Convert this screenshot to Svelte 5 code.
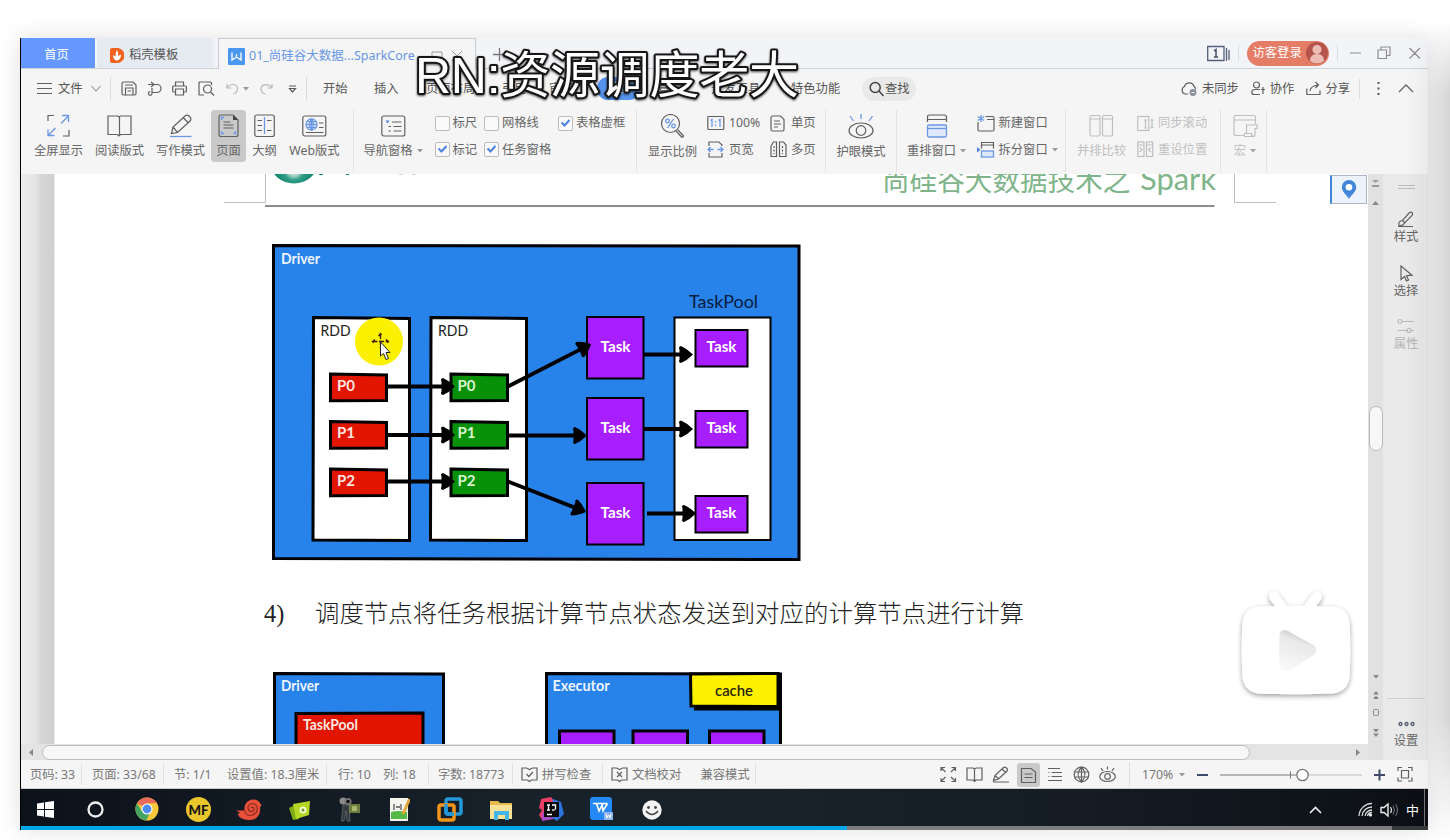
<script>
  const g = 'stroke="#606060" fill="none" stroke-width="1.2"';
  const l = 'stroke="#b9b9b9" fill="none" stroke-width="1.2"';
  const b = 'stroke="#6a97e6" fill="none" stroke-width="1.3"';
  const icons = {
    burger: `<path ${g} d="M0 3.5H15M0 8.5H15M0 13.5H15"/>`,
    down: `<path stroke="#aaa" fill="none" stroke-width="1.2" d="M.5 6 5 11 9.5 6"/>`,
    save: `<path ${g} d="M1 3.5Q1 2 2.5 2H12l3 3v8.5Q15 15 13.500 15H2.500Q1 15 1 13.500ZM4.500 15V8H12V15M4 5h8M6.500 11h3.500"/>`,
    exportp: `<path ${g} d="M1 4.500H6M4 2 7 4.500 4 7M7 4.500h3a4 4 0 0 1 0 8H5.500M5 8v5.500a1.800 1.800 0 1 1-1.800-1.800"/>`,
    print: `<path ${g} d="M3.500 6V2h8V6M3.500 12H1.500Q.7 12 .7 11V7.200Q.7 6 2 6H13.200Q14.400 6 14.400 7.200V11Q14.400 12 13.500 12H11.500M3.500 9h8v6h-8Z"/>`,
    preview: `<path ${g} d="M6 15H2Q1 15 1 14V3Q1 2 2 2H12.500Q13.500 2 13.500 3V5"/><circle ${g} cx="9.500" cy="9" r="4"/><path ${g} d="m12.500 12 3.500 3.500"/>`,
    undo: `<path ${l} d="M1 4v4h4.500M1 8C4 3.500 11 3 11.500 8.500 11.500 11 10 13 7.500 14"/>`,
    redo: `<path ${l} d="M12 4v4H7.500M12 8C9 3.500 1.500 3 1 9 1 11.500 3 13.500 5.500 14"/>`,
    more: `<path ${g} d="M1 6h7M1.500 8.500h6L4.500 12Z"/>`,
    search: `<circle stroke="#444" fill="none" stroke-width="1.500" cx="6.200" cy="7.500" r="5"/><path stroke="#444" stroke-width="1.500" d="m10 11 4.500 5"/>`,
    cloud: `<path ${g} d="M8 14H5a4 4 0 0 1-.5-7.500 5 5 0 0 1 9.500-.3 4 4 0 0 1 1.500 3"/><circle cx="13" cy="12.500" r="3.400" fill="#8a8f9c"/><path d="M11.500 12.500h3" stroke="#fff"/>`,
    person: `<circle ${g} cx="5.500" cy="5" r="3"/><path ${g} d="M9 9.500H4Q.8 9.500.8 12.500 .8 14.500 3 14.500H9M12 7v7M10 9.500h4"/>`,
    share: `<path ${g} d="M.8 8.500v6H14v-4M4 11q.5-5 8-6M9.500 2 12.500 5 9.500 8"/>`,
    up: `<path stroke="#666" fill="none" stroke-width="1.300" d="m1 12 7-7 7 7"/>`,
    full: `<path ${g} d="M1 7V1.500H7M22 16v6H16"/><path ${b} d="M14 9.500 21.500 2M15 1.500h6.500V8M8.500 14 1 21.500M1 15.500v6H7.500"/>`,
    read: `<path ${g} d="M1 2h9.500l1.500 1 1.500-1H24V20.500H13.500L12 22l-1.500-1.500H1ZM12.500 3V21"/>`,
    write: `<path ${g} d="M2.500 19.500 4 13 16 2Q18.500 0 21 3 23 5.500 20.500 7.500L8.500 18.500ZM4 13l4.500 5.500L20 8M14.500 4l5 5"/><path ${b} d="M1 22.500H22.500"/>`,
    page: `<path ${g} d="M1 3Q1 1 3 1H15l5 5V20.500q0 2-2 2H3q-2 0-2-2Z"/><path d="M15 1v5h5Z" fill="#444"/><path ${g} stroke-width="1" d="M5.500 8h7M5.500 11h10M5.500 14h10"/><path ${b} d="M3.500 6V3.500H6M3.500 17v2.500H6M15.500 19.500H17.500V17"/>`,
    outline: `<rect ${g} x=".8" y="1" width="19.500" height="21.500" rx="2"/><path ${b} d="M10.500 3V20"/><path ${g} stroke-width="1" d="M3.500 6.500H8M3.500 11.500H8M3.500 16.500H8M13 6.500h4.500M13 16.500h4.500"/>`,
    web: `<rect ${g} x=".8" y="2" width="23" height="20" rx="2"/><circle ${b} cx="9.500" cy="10.500" r="5.500"/><path ${b} stroke-width="1" d="M4 10.500H15M9.500 5V16M5 7.700h9M5 13.300h9M9.500 5Q5.500 10.500 9.500 16 13.500 10.500 9.500 5"/><path ${g} stroke-width="1" d="M17 9h4.500M17 13.500h4.500M4 18.500H21.500"/>`,
    nav: `<rect ${g} x=".8" y="2" width="23" height="20" rx="2"/><path fill="#4d82df" d="M4.500 6.500h4l-2 3Z"/><path ${g} d="M11 8h9.500M12.500 12.500h8M12.500 17h8M7.500 12.500h2.500M7.500 17h2.500"/>`,
    ratio: `<circle ${g} cx="10.500" cy="9.500" r="9"/><path ${g} d="m16 17 5.500 6q1.500.7 2-1L18 16"/><path ${b} d="M13.500 5 7.500 14"/><circle ${b} cx="7.500" cy="7" r="1.800"/><circle ${b} cx="13.500" cy="12" r="1.800"/>`,
    one: `<rect ${g} x=".8" y="1.500" width="16" height="13" rx="1"/><path ${b} d="M3.500 5.500 5 4.500V12M11.500 5.500 13 4.500V12M8.500 6v1.500M8.500 9.500V11"/>`,
    wide: `<path ${g} d="M2 5V1H12l3 3V5M2 12v4H15V12"/><path ${b} d="M1 8.500H6.500M3.500 6 1 8.500 3.500 11M10.500 8.500H16M13.500 6 16 8.500 13.500 11"/>`,
    single: `<path ${g} d="M1 2.500Q1 1 2.500 1H10.500L14 4.500V14.500Q14 16 12.500 16H2.500Q1 16 1 14.500Z"/><path ${g} stroke-width="1" d="M4 6h6M4 9h7M4 12h4"/>`,
    multi: `<path ${g} d="M1 5 3.500 1H6.500V15.500H1ZM9.500 1h4L16 4V15.500H9.500Z"/><path ${g} stroke-width="1" stroke-dasharray="2 1.500" d="M4 5v8M12.500 5v8"/>`,
    eye: `<ellipse ${g} cx="13" cy="16.500" rx="12" ry="7.500"/><circle ${g} stroke="#999" cx="13" cy="16.500" r="4.800"/><path ${b} d="m2 2 3.500 5M13 0v5M24.500 2 21 7"/>`,
    arrange: `<path ${g} d="M1.500 8V3Q1.500 1 3.500 1H18.500q2 0 2 2V8M1.500 5.500h19"/><rect ${b} x="1.500" y="11" width="19" height="12" rx="1.500" style="fill:#dfe9fb"/><path ${b} d="M1.500 14.500h19"/>`,
    neww: `<path ${g} d="M1 7v7.500Q1 16 2.500 16H15.500Q17 16 17 14.500V3Q17 1.500 15.500 1.500H8.500M10 4.500h7"/><path ${b} stroke-width="1" d="M4 0V7M.7 1.500l6.500 4M7.200 1.500l-6.500 4"/>`,
    split: `<path ${g} d="M4.500 7.500V1.500H16.500V7.500M4.500 4h12"/><rect ${b} x="4.500" y="10" width="12" height="6" style="fill:#dfe9fb"/><path d="M0 6l3.500 2.800L0 11.500Z" fill="#4d82df"/>`,
    compare: `<rect ${l} x="1" y="1.500" width="10" height="20.500" rx="1.500"/><rect ${l} x="13.500" y="1.500" width="10" height="20.500" rx="1.500"/><path ${l} d="M1 5h10M13.500 5h10"/>`,
    sync: `<rect ${l} x=".8" y="1.500" width="11" height="14"/><path ${l} d="M8.500 5v8M7 5h3M7 13h3M15 4V13.500M13.500 5h3M13.500 12.500h3"/>`,
    reset: `<rect ${l} x=".8" y="1" width="6.200" height="14.500"/><rect ${l} x="9.500" y="1" width="6.200" height="14.500"/><path ${l} d="M.8 4H7M9.500 4h6M2.500 6.500 5 8.500 2.500 11M14 6.500 11.500 8.500 14 11"/>`,
    macro: `<path ${l} d="M11 21.500H3q-2 0-2-2V3.500q0-2 2-2H20.500q2 0 2 2V10M1 6H22.500M13.500 19V11H24V14.500H22V20.500Q22 22.500 20 22.500H11.500Q10.500 20.500 12 19.500H18.500Q18 22 20 22.500"/>`,
    check: `<path ${g} stroke="#68708a" d="M1 2H5.500L8.500 3.500 11.500 2H16V14H10.500L8.500 15.500 6.500 14H1Z"/><path ${g} stroke="#68708a" d="m5.500 8 2.300 2.500L12 6"/>`,
    proof: `<path ${g} stroke="#68708a" d="M1 2H5.500L8.500 3.500 11.500 2H16V14H10.500L8.500 15.500 6.500 14H1Z"/><path ${g} stroke="#68708a" d="m6 6 5 5M11 6l-5 5"/>`,
    sfull: `<path ${g} d="M1 5V1.500H5M1.500 2l4 4M11.500 1.500h4V5M15 2 11 6M1 12v3.500H5M1.500 15l4-4M15.500 12v3.500h-4M15 15 11 11"/>`,
    sread: `<path ${g} d="M1 2H7L8.500 3 10 2h6V14H10L8.500 15.500 7 14H1ZM8.500 3V15"/>`,
    spen: `<path ${g} d="M1.500 14.500 3 9.500 11.500 1.500q1.500-1 3 .5t.5 3L6.500 13ZM3 9.500l3.500 3.500M10 3l3.500 3.500M1 16H17"/>`,
    spage: `<path ${g} stroke="#333" d="M1.500 1.500H11L15.500 5V15.500H1.500ZM4.500 7h8M4.500 10.500h8"/>`,
    slist: `<path ${g} d="M1 2.500H13M4.500 6.500H15M4.500 10.500H15M1 14.500H15M1.500 6.500h1M1.500 10.500h1"/>`,
    sglobe: `<circle ${g} cx="8.500" cy="8.500" r="7.300"/><path ${g} stroke-width="1.100" d="M1.500 6H15.500M1.500 11H15.500M8.500 1V16M8.500 1Q1.500 8.500 8.500 16 15.500 8.500 8.500 1"/>`,
    seye: `<ellipse ${g} cx="8.500" cy="10.500" rx="7.800" ry="5"/><circle ${g} cx="8.500" cy="10.500" r="2.800"/><path ${g} d="m2 2 2 3M8.500.500v3M15 2l-2 3"/>`,
    fit: `<path ${g} stroke="#4b5578" d="M1 5V1.500H5M11 1.500h4V5M1 11.500V15H5M11 15h4V11.500M4.500 4.500h7v7.500h-7Z"/>`,
    brush: `<path ${g} d="M1 15.500H16M2 14.500Q1 10 5.500 9.500L12.500 1.500q2-1 3 .8.300 1-.5 2L7.500 12Q6 15 2 14.500M5.500 9.500 8 12"/>`,
    cursor: `<path ${g} d="M4 1V14.500L7.500 11.500 9.500 16l2-1L9.500 10.700l5.500-.5Z"/>`,
    props: `<path ${l} stroke="#aaa" d="M5.500 3.500H17M1 12.500H10M14 12.500H17"/><circle ${l} cx="3" cy="3.500" r="2"/><circle ${l} cx="12" cy="12.500" r="2"/>`,
    pin: `<path fill="#4286dc" d="M8 0a7.200 7.200 0 0 1 7.200 7.200C15.200 12 10 15 8 19 6 15 .8 12 .8 7.200A7.200 7.200 0 0 1 8 0Z"/><circle cx="8" cy="7.200" r="3.300" fill="#fff"/>`,
    win: `<path fill="#fff" d="M0 2.500 7 1.500V8H0ZM8 1.300 17 0V8H8ZM0 9h7v6.500l-7-1ZM8 9h9v8L8 15.800Z"/>`,
    ring: `<circle cx="8.500" cy="8.500" r="7" fill="none" stroke="#eee" stroke-width="2.300"/>`,
    chrome: `<circle cx="12" cy="12" r="11.500" fill="#f8c83a"/><path d="M12 12 2 6.200A11.500 11.500 0 0 1 22 6.300H12Z" fill="#e66b59"/><path d="M2 6.200A11.500 11.500 0 0 0 11 23.500L15.500 15 12 12 7 14.500Z" fill="#43a463"/><circle cx="12" cy="12" r="5.500" fill="#fff"/><circle cx="12" cy="12" r="4.400" fill="#4e8df0"/>`,
    mf: `<circle cx="12.500" cy="12.500" r="12.500" fill="#e9c62c"/><text x="2.500" y="17.500" font-family="Lato" font-weight="900" font-size="14" fill="#161616" textLength="20" lengthAdjust="spacingAndGlyphs">MF</text>`,
    shell: `<path fill="#e8503a" d="M0 11Q4 12 8.500 11 8 3 15 .8 21-.5 24 4L25.500 6 24 8.500Q25 20 14 21 4 21 1.500 15L4 14Z"/><path d="M8.500 11Q9 16 14 16.500 20.500 16 21.500 10 21 4.500 16 4.500 11.500 5.500 12 9.500 13 13 16.500 12.500 19 11 17.500 8.500 16 7.500 15 9" fill="none" stroke="#8f2a1d" stroke-width="1.200"/>`,
    green: `<path fill="#7fae17" d="M0 8 6 5l4 14-6 1Z"/><path fill="#b5d723" d="M4 4 21 1 20 15 7 19Z"/><circle cx="14" cy="10" r="3.500" fill="#f0fad0"/><circle cx="14" cy="10" r="1.500" fill="#6c9410"/>`,
    cam: `<circle cx="4" cy="4" r="3.500" fill="#8b8b8b"/><circle cx="9" cy="4.500" r="3.500" fill="#777"/><circle cx="9" cy="4.500" r="1.800" fill="#111"/><path d="M4 8H10L11 24H8L7 14 5 24H2.500Z" fill="#333b3f" stroke="#6a7173" stroke-width=".7"/><rect x="10" y="7" width="11" height="9" fill="#6c7d42"/><rect x="13" y="9" width="5" height="5" fill="#a5b56a"/>`,
    note: `<rect x="1" y="1" width="18" height="23" fill="#f5f5f0"/><path d="M2 15q8-2 16 0v7H2Z" fill="#55b947"/><path d="M5 7v6M7 10h4M12 7v6" stroke="#555" stroke-width="1.300"/><path d="M20.500 2 14 17" stroke="#e1a83b" stroke-width="3"/>`,
    vm: `<rect x="9" y="2" width="15" height="15" rx="2" fill="none" stroke="#2498d8" stroke-width="3.500"/><rect x="2" y="8" width="15" height="15" rx="2" fill="none" stroke="#f2951b" stroke-width="3.500"/><path d="M9 7v8Q9 17 11 17H17" stroke="#2498d8" stroke-width="3.500" fill="none"/>`,
    folder: `<path fill="#e8ba4d" d="M0 1H8l2 2H22V19H0Z"/><path fill="#fbe297" d="M0 5H22V19H0Z"/><path fill="#43b5e8" d="M4 11H19v9H15V15H8v5H4Z"/>`,
    idea: `<path fill="#e93e66" d="M2 2 12 0l5 7L4 24 0 18 3 13 0 11Z"/><path fill="#2d75df" d="m14 2 8 3 3 12-7 7-6-4Z"/><path fill="#a94cc7" d="m3 15 12 7-12 2Z"/><rect x="5" y="5" width="15" height="15" fill="#080808"/><path d="M8 8h3M9.500 8v5M8 13h3M13 8h3.500v4q-1 1.500-3.500 1M8 17.500h5" stroke="#fff" stroke-width="1.300" fill="none"/>`,
    wps: `<rect width="22" height="23" rx="3" fill="#2688f4"/><path d="M3 6.500H6.500L9 14 13 6.500H17.500M7.500 6.500H12L13 14 17.500 6.500" fill="none" stroke="#fff" stroke-width="1.600"/><rect x="14" y="15" width="9" height="8" fill="#90b5ee"/><path d="m16 17 1 4 1.500-3 1.500 3 1-4" fill="none" stroke="#fff"/>`,
    smile: `<circle cx="10" cy="10" r="9.700" fill="#f3f3f3"/><circle cx="6.500" cy="7.500" r="1.400" fill="#444"/><circle cx="13.500" cy="7.500" r="1.400" fill="#444"/><path d="M4 11q6 7 12 0" stroke="#444" fill="none" stroke-width="1.500"/>`,
    wifi: `<path d="M1 14A13 13 0 0 1 14 1.500M4 14A10 10 0 0 1 14 5M7 14a7 7 0 0 1 7-6M9.500 14A4.500 4.500 0 0 1 14 10.500" stroke="#ddd" stroke-width="1.300" fill="none"/><circle cx="12.500" cy="13" r="1.500" fill="#fff"/>`,
    vol: `<path d="M1 5.500H4L8 2V14L4 10.500H1Z" fill="none" stroke="#eee" stroke-width="1.400"/><path d="M10.500 5q2 3 0 6" fill="none" stroke="#ddd" stroke-width="1.200"/><path d="M13 3.500q3 4.500 0 9M15.500 2q4 6 0 12" fill="none" stroke="#777"/>`,
    tri: `<path fill="#999" d="M0 0h6L3 3.500Z"/>`,
    triup: `<path fill="#888" d="M0 4h7L3.500 0Z"/>`
  };
  const quick = [
    ['save', 26], ['exportp', 25], ['print', 26], ['preview', 28], ['undo', 17], ['tri', 17], ['redo', 28.5], ['more', 17]
  ];
  const menus = [
    ['开始', 51], ['插入', 52], ['页面布局', 76], ['引用', 47], ['审阅', 57], ['视图', 52, true], ['章节', 53], ['开发工具', 80], ['特色功能', 71]
  ];
  const views = [
    ['full', '全屏显示', 61, 23], ['read', '阅读版式', 61, 25], ['write', '写作模式', 61, 24],
    ['page', '页面', 35, 21, true], ['outline', '大纲', 37, 21], ['web', 'Web版式', 63, 25]
  ];
  const status = [
    ['页码: 33', 52, 1], ['页面: 33/68', 72, 1], ['节: 1/1', 53], ['设置值: 18.3厘米', 99.5, 1], ['行: 10', 45],
    ['列: 18', 46, 1], ['字数: 18773', 75, 1]
  ];
  const tasks = [
    ['win', 17, 50], ['ring', 17, 51], ['chrome', 24, 51.5], ['mf', 25, 51], ['shell', 26, 51], ['green', 22, 50], ['cam', 22, 50],
    ['note', 21, 50], ['vm', 26, 51], ['folder', 22, 50], ['idea', 25, 51], ['wps', 23, 50], ['smile', 20, 50]
  ];
  const parts = [0, 1, 2];
  const rowY = [374, 421.5, 469];
  const lineY = [386.5, 435, 481.5];
  const taskY = [317, 398, 483];
  const poolY = [330, 411, 496];
  const taskText = [352, 433, 518];
</script>

{#snippet icon(name, w = 17, h = 17)}
  <svg class="ic" width={w} height={h} viewBox="0 0 {w} {h}">{@html icons[name]}</svg>
{/snippet}

{#snippet arrow(x1, y1, x2, y2)}
  <g transform="translate({x2} {y2}) rotate({(Math.atan2(y2 - y1, x2 - x1) * 180) / Math.PI})">
    <path d="M{-Math.hypot(x2 - x1, y2 - y1)} 0H-8" stroke="#000" stroke-width="3.8" />
    <path d="M0 0Q-6-6-12-8.500-15-8-13.500-5V5Q-15 8-12 8.500-6 6 0 0Z" />
  </g>
{/snippet}

{#snippet hand(x, y, len, label, fill)}
  <text {x} {y} {fill} textLength={len} lengthAdjust="spacingAndGlyphs">{label}</text>
{/snippet}

{#snippet box(label, on)}
  <span class="check"><i class:on>{#if on}<svg width="11" height="10" viewBox="0 0 11 10"><path d="M1.500 4.500 4.500 7.500 9.500 2" fill="none" stroke="#4d82df" stroke-width="2" /></svg>{/if}</i>{label}</span>
{/snippet}

<div class="screen">
  <main class="window">
    <header class="tabs">
      <div class="home">首页</div>
      <div class="tab docer">
        <svg width="14" height="15" viewBox="0 0 14 15"><path fill="#f4601d" d="M0 2Q0 0 2 0H7a7.500 7.500 0 0 1 0 15H2Q0 15 0 13Z" /><path fill="#fff" d="M7 2Q9 5 8 8L11 6.500Q11 12 7 12.500 3 12 3 7L5.500 8.500Q5 5 7 2Z" /></svg>
        稻壳模板
      </div>
      <div class="tab active">
        <svg width="17" height="17" viewBox="0 0 17 17"><rect width="17" height="17" rx="1" fill="#4c97ee" /><path d="M4 4.500V12L8.500 9l4.500 3V4.500M8.500 9V6" fill="none" stroke="#fff" stroke-width="1.300" /></svg>
        <span>01_尚硅谷大数据...SparkCore</span>
        <svg class="tabctl" width="32" height="13" viewBox="0 0 32 13"><path d="M1 2h10v7H1ZM4 12h4M21 1l10 10M31 1 21 11" fill="none" stroke="#999" /></svg>
      </div>
      <div class="plus"><svg width="13" height="13" viewBox="0 0 13 13"><path d="M6.500 0v13M0 6.500h13" stroke="#777" stroke-width="1.300" /></svg></div>
      <div class="caption-tools">
        <svg width="23" height="17" viewBox="0 0 23 17"><path d="M.7 1.500H17V15.500H.7ZM19.500 3v13M22 5v10" fill="none" stroke="#56607c" stroke-width="1.300" /><path d="M7 6 9 4.500V12M7 12h4" fill="none" stroke="#444c68" stroke-width="1.500" /></svg>
        <i class="bar"></i>
        <div class="login">访客登录<svg width="22" height="22" viewBox="0 0 22 22"><circle cx="11" cy="11" r="11" fill="#b4544c" /><circle cx="11" cy="7.500" r="4.500" fill="#edbdb5" /><path d="M4 19q0-7 7-7t7 7q-7 5-14 0Z" fill="#edbdb5" /></svg></div>
        <i class="bar two"></i>
        <svg width="71" height="14" viewBox="0 0 71 14"><path d="M0 7h11M28 4h8.500v8.500H28ZM31 4V1h9V9.500H36.500M59.500 2 70 12.500M70 2 59.500 12.500" fill="none" stroke="#8e8e8e" stroke-width="1.200" /></svg>
      </div>
    </header>

    <nav class="menu">
      <div class="file">{@render icon('burger', 15)}<span>文件</span>{@render icon('down', 10)}</div>
      <i class="bar"></i>
      <div class="quick">{#each quick as [name, w]}<span style:width="{w}px">{@render icon(name, name === 'tri' ? 6 : 17, name === 'tri' ? 4 : 17)}</span>{/each}</div>
      <i class="bar"></i>
      <div class="items">{#each menus as [name, w, on]}<span style:width="{w}px"><b class:on>{name}</b></span>{/each}</div>
      <div class="find">{@render icon('search', 16)}查找</div>
      <div class="account">
        {@render icon('cloud', 18)}<span>未同步</span>{@render icon('person', 15)}<span>协作</span>{@render icon('share', 15)}<span>分享</span>
        <i class="bar"></i><svg class="dots" width="3" height="15" viewBox="0 0 3 15"><path d="M1.500 1v2M1.500 6.500v2M1.500 12v2" stroke="#555" stroke-width="2" /></svg>{@render icon('up', 16)}
      </div>
    </nav>

    <section class="ribbon">
      <div class="group views">
        {#each views as [name, label, w, iw, on]}<div class="tool" class:on style:width="{w}px">{@render icon(name, iw, 24)}<span>{label}</span></div>{/each}
      </div>
      <div class="group panes">
        <div class="tool nav">{@render icon('nav', 25, 24)}<span>导航窗格 {@render icon('tri', 6, 4)}</span></div>
        <div class="checks">
          {@render box('标尺', false)}{@render box('网格线', false)}{@render box('表格虚框', true)}
          {@render box('标记', true)}{@render box('任务窗格', true)}
        </div>
      </div>
      <div class="group zoomg">
        <div class="tool">{@render icon('ratio', 25, 25)}<span>显示比例</span></div>
        <div class="pair a"><span>{@render icon('one', 18)}100%</span><span>{@render icon('wide', 18)}页宽</span></div>
        <div class="pair"><span>{@render icon('single')}单页</span><span>{@render icon('multi')}多页</span></div>
      </div>
      <div class="group eyeg"><div class="tool">{@render icon('eye', 26, 25)}<span>护眼模式</span></div></div>
      <div class="group windows">
        <div class="tool">{@render icon('arrange', 22, 24)}<span>重排窗口 {@render icon('tri', 6, 4)}</span></div>
        <div class="pair"><span>{@render icon('neww', 18)}新建窗口</span><span>{@render icon('split', 18)}拆分窗口 {@render icon('tri', 6, 4)}</span></div>
      </div>
      <div class="group compare off">
        <div class="tool">{@render icon('compare', 25, 24)}<span>并排比较</span></div>
        <div class="pair"><span>{@render icon('sync')}同步滚动</span><span>{@render icon('reset')}重设位置</span></div>
      </div>
      <div class="group macro off"><div class="tool">{@render icon('macro', 25, 24)}<span>宏 {@render icon('tri', 6, 4)}</span></div></div>
    </section>

    <section class="work">
      <div class="canvas">
        <svg class="doc" width="1347" height="570" viewBox="21 174 1347 570">
          <defs>
            <linearGradient id="edge"><stop offset="0" stop-color="#ebebeb" /><stop offset=".45" stop-color="#e4e4e4" /><stop offset=".6" stop-color="#d6d6d6" /><stop offset="1" stop-color="#cfcfcf" /></linearGradient>
            <radialGradient id="teal" gradientUnits="userSpaceOnUse" cx="294" cy="170" r="17"><stop offset="0" stop-color="#d6eee8" /><stop offset=".35" stop-color="#a5d5c8" /><stop offset=".6" stop-color="#2f9c84" /><stop offset="1" stop-color="#178a72" /></radialGradient>
            <linearGradient id="play" x1=".5" x2=".2" y2=".9"><stop offset="0" stop-color="#c6c6c6" /><stop offset=".3" stop-color="#e9e9e9" /><stop offset="1" stop-color="#f8f8f8" /></linearGradient>
            <filter id="soft" x="-30%" y="-30%" width="160%" height="160%"><feDropShadow dx="0" dy="2" stdDeviation="2.500" flood-opacity=".38" /></filter>
          </defs>
          <rect x="21" y="174" width="1347" height="570" fill="#fff" />
          <rect x="21" y="174" width="33.500" height="570" fill="url(#edge)" />
          <path d="M265.500 174V202.500H224M1234.500 174V202.500H1276" fill="none" stroke="#bdbdbd" />
          <ellipse cx="294" cy="164" rx="23" ry="19.500" fill="url(#teal)" />
          <path d="M319 174h4M346 174h3" stroke="#178a72" stroke-width="2" /><path d="M399 174h4M412 174h4" stroke="#aaa" />
          <g fill="#80b48b" font-size="27.600"><text x="882" y="190.500">尚硅谷大数据技术之</text><text x="1140" y="190" font-family="Lato" font-size="31" textLength="76" lengthAdjust="spacingAndGlyphs">Spark</text></g>
          <path d="M265 206H1214.500" stroke="#8c8c8c" stroke-width="1.800" />

          <g stroke="#000" stroke-width="3" fill="#fff">
            <path d="M273.500 245.500 799 246V559.500L273.500 558.500Z" fill="#2782ea" />
            <path d="M313.500 317.500 409.500 318.500V540.500L313 540ZM431 317.500 526.500 318.500V540.500L430.500 540Z" />
            <rect x="674.500" y="317.500" width="96" height="222.500" stroke-width="2" />
            {#each parts as i}
              <path d="M330.500 {rowY[i]}l56 1v25.500l-56 .3Z" fill="#e21500" />
              <path d="M451 {rowY[i]}l56.500 1v25.500l-56.500 .3Z" fill="#079109" />
              <rect x="587" y={taskY[i]} width="56.500" height="61.500" fill="#a71eff" stroke-width="2" />
              <rect x="695.500" y={poolY[i]} width="52" height="36.500" fill="#a71eff" stroke-width="2" />
            {/each}
          </g>
          {#each parts as i}{@render arrow(388, lineY[i], 455, lineY[i])}{/each}
          {@render arrow(508, 386.5, 591, 344)}
          {@render arrow(508, 435.5, 587, 435.5)}
          {@render arrow(508, 481.5, 586, 512)}
          {@render arrow(644, 354.5, 693, 354.5)}
          {@render arrow(644, 429, 693, 429)}
          {@render arrow(647, 513.5, 696, 513.5)}
          <g class="hand" font-weight="700">
            {@render hand(281, 263.5, 39, 'Driver', '#eef4ff')}
            {#each parts as i}
              {@render hand(337, rowY[i] + 16.5, 18, 'P' + i, '#ffe6e0')}
              {@render hand(457.5, rowY[i] + 16.5, 18, 'P' + i, '#d9f5d0')}
              {@render hand(600.5, taskText[i], 30, 'Task', '#fff')}
              {@render hand(706.5, taskText[i], 30, 'Task', '#fff')}
            {/each}
          </g>
          <g class="hand">{@render hand(320.5, 335.5, 30, 'RDD', '#222')}{@render hand(438, 335.5, 30, 'RDD', '#222')}</g>
          <g class="hand pool">{@render hand(689, 308, 69, 'TaskPool', '#071b3c')}</g>
          <circle cx="379" cy="341.500" r="24" fill="#faf000" />
          <path d="M380.500 334v14M372.500 341.500h16M378.500 336l2-2.500 2 2.500M375 339.500l-2.500 2 2.500 2M386 339.500l2.500 2-2.500 2" fill="none" stroke="#421" stroke-width="1.400" stroke-dasharray="5 1.500" />
          <path d="M380.500 342V356L383.500 353.500 386 359.500 388.500 358.500 386 352.500H390Z" fill="#fff" stroke="#222" />

          <text class="body" x="264" y="621.500">4)</text>
          <text class="body" x="315" y="621.500" textLength="709">调度节点将任务根据计算节点状态发送到对应的计算节点进行计算</text>

          <g stroke="#000" stroke-width="3">
            <path d="M274.500 673.500 443.500 674V750H274.500ZM546.500 673.500 780.500 674V750H546.500Z" fill="#2782ea" />
            <path d="M296 713.500 423 713V750H296Z" fill="#e21500" />
            <path d="M690.500 674 778 673.500V706.500L691 706Z" fill="#fff200" /><path d="M694 708.500H781M779.500 673V709" stroke-width="4" />
            <path d="M559.500 731H614V750H559.500ZM633 731H687.500V750H633ZM709.500 731H764V750H709.500Z" fill="#a71eff" />
          </g>
          <g class="hand" font-weight="700">{@render hand(281, 691, 38, 'Driver', '#eef4ff')}{@render hand(303, 730, 55, 'TaskPool', '#ffe6e0')}{@render hand(552.5, 691, 57, 'Executor', '#eef4ff')}</g>
          <g class="hand" font-weight="600">{@render hand(715, 696, 38, 'cache', '#27250a')}</g>

          <g filter="url(#soft)"><path d="M1274 596.500 1284 610M1317 596.500 1307 610" stroke="#fff" stroke-width="10" stroke-linecap="round" /><path fill="#fff" d="M1258 606.500Q1295 605 1333 606.500 1348 608 1349.500 623 1351 650 1349.500 677 1348 691 1333 693.500 1296 695 1258 693.500 1244 691 1242.500 677 1241 650 1242.500 623 1244 608 1258 606.500Z" /></g>
          <path fill="url(#play)" d="M1279.500 635Q1280.500 628 1288 631L1314 645.500Q1319 650 1314 655L1290 670.500Q1281 673 1279.500 666 1278.500 650 1279.500 635Z" />
        </svg>
        <div class="pinbox">{@render icon('pin', 16, 19)}</div>
        <div class="hscroll"><svg width="5" height="7" viewBox="0 0 5 7"><path d="M4 0v7L0 3.500Z" fill="#888" /></svg><i></i><svg class="r" width="5" height="7" viewBox="0 0 5 7"><path d="M0 0v7L4 3.500Z" fill="#888" /></svg></div>
      </div>
      <div class="vscroll">
        <svg width="9" height="8" viewBox="0 0 9 8"><path d="M2 0h5L4.500 3ZM1 5h7v2H1Z" fill="#999" /><path d="M1.500 1H7.500" stroke="#999" /></svg>
        {@render icon('triup', 7, 4)}
        <i></i>
        <svg class="ends" width="8" height="64" viewBox="0 0 8 64"><path d="M1 1h6L4 4.500ZM1 20.500h6L4 17ZM1 25h6L4 21.500ZM1 55h6L4 58.500ZM1 59.500h6L4 63Z" fill="#888" /><rect x="1.500" y="35.500" width="5" height="6" rx="1" fill="none" stroke="#888" /></svg>
      </div>
      <aside>
        <i class="grip"></i>
        <div>{@render icon('brush')}样式</div><div>{@render icon('cursor')}选择</div><div class="dim">{@render icon('props', 18)}属性</div>
        <div class="setting"><svg width="17" height="6" viewBox="0 0 17 6"><g fill="none" stroke="#555c70" stroke-width="1.300"><circle cx="2.500" cy="3" r="1.500" /><circle cx="8.500" cy="3" r="1.500" /><circle cx="14.500" cy="3" r="1.500" /></g></svg>设置</div>
      </aside>
    </section>

    <footer class="status">
      <div class="facts">
        {#each status as [text, w, line]}<span class:line style:width="{w}px">{text}</span>{/each}
        <span class="line spell">{@render icon('check')}拼写检查</span>
        <span class="proof">{@render icon('proof')}文档校对</span>
        <span class="line compat">兼容模式</span>
      </div>
      <div class="modes">
        {@render icon('sfull')}{@render icon('sread')}{@render icon('spen', 18)}<span class="sel">{@render icon('spage')}</span>{@render icon('slist')}{@render icon('sglobe')}{@render icon('seye')}
      </div>
      <div class="zoomer">
        <span>170%</span>{@render icon('tri', 6, 4)}
        <svg width="188" height="14" viewBox="0 0 188 14"><path d="M0 7h11M177 7h11M182.500 1.500v11" stroke="#3e4a6b" stroke-width="2" /><path d="M23 7H99M93.500 3.500v7" stroke="#777" fill="none" /><path d="M112 7h53" stroke="#bbb" /><circle cx="105.500" cy="7" r="5.700" fill="#fff" stroke="#777" stroke-width="1.300" /></svg>
        {@render icon('fit', 16)}
      </div>
    </footer>

    <div class="taskbar">
      <div class="apps">{#each tasks as [name, w, cell]}<span style:width="{cell}px">{@render icon(name, w, { win: 17, ring: 17, smile: 20, folder: 20, green: 20, shell: 21 }[name] ?? 25)}</span>{/each}</div>
      <div class="tray"><svg width="13" height="8" viewBox="0 0 13 8"><path d="m1 7 5.500-5.500L12 7" fill="none" stroke="#eee" stroke-width="1.600" /></svg>{@render icon('wifi', 16, 16)}{@render icon('vol', 19, 16)}<span>中</span><i></i></div>
    </div>
    <div class="progress"><i></i><b></b></div>
  </main>
  <div class="side-shade"></div>
  <svg class="subtitle" width="400" height="66" viewBox="0 0 400 66"><text x="3" y="48" textLength="384">RN:资源调度老大</text></svg>
</div>

<style>
  :global(body) { margin: 0; background: #fff; overflow: hidden; }
  * { box-sizing: border-box; }
  .screen { position: relative; width: 1450px; height: 840px; padding: 38px 22px 10px 20px; overflow: hidden; background: #fff; font: 12.3px/16px "Noto Sans", "Noto Sans CJK SC", sans-serif; color: #666; }
  .window { width: 1408px; height: 792px; border-left: 1px solid #000; display: flex; flex-direction: column; background: #f5f5f5; box-shadow: 0 0 22px rgba(0, 0, 0, .13); }
  .ic, svg { display: block; flex: none; }
  .bar { width: 1px; background: #dcdcdc; flex: none; }

  .tabs { height: 31px; flex: none; display: flex; background: #f3f4f7; border-bottom: 1px solid #cdd1da; white-space: nowrap; }
  .home { width: 74px; display: flex; align-items: center; justify-content: center; padding: 4px 3px 0 0; background: #6598ff; color: #fff; }
  .tab { display: flex; align-items: center; padding-top: 4px; }
  .docer { width: 119px; margin-left: 2px; padding-left: 13px; gap: 5px; background: #e6eaf1; color: #555; border-right: 3px solid #f0f2f6; }
  .active { width: 258px; height: 31px; margin-left: 2px; padding-left: 9px; gap: 4px; border: 1px solid #c6cbd6; border-bottom: 0; background: #f5f5f5; color: #6797e4; }
  .active span { width: 172px; font-size: 12.500px; }
  .tabctl { margin-left: 6px; }
  .plus { padding: 10px 0 0 17px; }
  .caption-tools { margin-left: auto; padding-right: 7px; display: flex; align-items: center; }
  .caption-tools .bar { height: 16px; margin: 0 8px; }
  .caption-tools .two { margin-right: 12px; }
  .login { width: 82.5px; height: 25px; display: flex; align-items: center; justify-content: space-between; padding: 0 1px 0 6px; border-radius: 13px; background: #e57c65; color: #fff; }

  .menu { height: 38px; flex: none; display: flex; align-items: center; padding-top: 1px; white-space: nowrap; color: #555; }
  .menu > .bar { height: 24px; }
  .file { display: flex; align-items: center; width: 89px; padding-left: 16px; }
  .file span { margin: 0 8px 0 6px; }
  .quick { display: flex; align-items: center; width: 195px; padding-left: 9.5px; }
  .quick span { display: flex; flex: none; }
  .items { display: flex; padding-left: 16px; width: 555px; }
  .items span { flex: none; }
  .items b { font-weight: 400; }
  .items b.on { margin: 0 -9px; padding: 3px 9px; border-radius: 11px; background: #5593ed; color: #fff; }
  .find { display: flex; align-items: center; height: 24px; width: 54px; padding-left: 7px; border-radius: 12px; background: #e9e9e9; }
  .account { margin-left: auto; display: flex; align-items: center; padding-right: 14px; }
  .account span { margin: 0 12px 0 4px; }
  .account .bar { height: 20px; margin-left: -3px; }
  .account .dots { margin: 0 18px 0 17px; }

  .ribbon { height: 67px; flex: none; display: flex; padding-top: 3px; white-space: nowrap; }
  .group { display: flex; height: 62px; flex: none; border-right: 1px solid #e3e3e3; }
  .tool { display: flex; flex-direction: column; align-items: center; height: 52px; padding-top: 4px; flex: none; }
  .tool > span { display: flex; align-items: center; gap: 4px; margin-top: 5px; }
  .tool.on { background: #c9c9c9; border-radius: 4px; }
  .views { width: 332.5px; padding-left: 7px; }
  .panes { width: 283.5px; }
  .nav { width: 79px; }
  .checks { display: grid; grid-template-columns: 49.5px 74px 74px; grid-template-rows: 26.500px 26.500px; padding-left: 2px; }
  .check { display: flex; align-items: center; gap: 3px; }
  .check i { width: 15px; height: 15px; padding: 1px; border: 1px solid #bcbcbc; border-radius: 2px; background: #fafafa; }
  .zoomg { width: 188.5px; padding-left: 6px; }
  .zoomg .tool { width: 59px; }
  .pair { display: grid; grid-template-rows: 26.500px 26.500px; align-items: center; }
  .pair span { display: flex; align-items: center; gap: 4px; }
  .pair.a { width: 68px; padding-left: 5px; }
  .eyeg { width: 71px; padding-left: 7px; }
  .eyeg .tool { width: 57px; }
  .windows { width: 169.5px; padding-left: 10px; }
  .windows .tool { width: 60px; }
  .windows .pair { padding-left: 10px; }
  .compare { width: 155px; padding-left: 10px; }
  .compare .tool { width: 51px; }
  .compare .pair { padding-left: 10px; }
  .macro { width: 46px; padding-left: 7px; }
  .macro .tool { width: 34px; }
  .off { color: #c0c0c0; }
  .off svg { opacity: .9; }

  .work { height: 586px; flex: none; display: flex; background: #e2e2e2; }
  .canvas { position: relative; width: 1347px; flex: none; }
  .doc { font-family: "Noto Sans CJK SC", sans-serif; }
  .hand { font-family: Lato, "Liberation Sans", sans-serif; font-size: 14.500px; }
  .pool { font-size: 17px; }
  .body { font-family: "Liberation Serif", "Noto Sans CJK SC", serif; font-size: 24.4px; font-weight: 300; fill: #222; }
  .pinbox { position: absolute; right: 1px; top: 1px; width: 37px; height: 29px; padding: 4px 0 0 9px; border: 1px solid #aab4c2; border-left: 2px solid #3f86d8; background: #edf3fd; }
  .hscroll { height: 16px; display: flex; align-items: center; padding-left: 8px; background: #e4e4e4; }
  .hscroll i { width: 1208px; height: 15px; margin-left: 8px; border: 1px solid #bcbcbc; border-radius: 8px; background: #f7f7f7; }
  .hscroll .r { margin-left: 106px; }
  .vscroll { width: 15px; flex: none; display: flex; flex-direction: column; align-items: center; padding-top: 6px; background: #e1e1e1; }
  .vscroll svg:nth-child(2) { margin-top: 13px; }
  .vscroll i { width: 14px; height: 45px; margin-top: 201px; border: 1px solid #b9b9b9; border-radius: 7px; background: #f7f7f7; }
  .vscroll .ends { margin-top: 223px; }
  aside { flex: 1; display: flex; flex-direction: column; align-items: center; padding-left: 1px; background: #eaeaea; }
  .grip { width: 17px; height: 4px; margin: 11px 0 22px; border: solid #bcbcbc; border-width: 1px 0; }
  aside div { display: flex; flex-direction: column; align-items: center; gap: 1px; height: 53.5px; color: #666; }
  aside .dim { color: #b5b5b5; }
  aside .setting { width: 38px; height: 54px; margin-top: 326px; padding-top: 22px; gap: 6px; border-top: 1px solid #d0d0d0; }

  .status { height: 29px; flex: none; display: flex; align-items: center; padding-top: 1px; border-bottom: 1px solid #cfcfcf; white-space: nowrap; color: #777; }
  .facts { display: flex; align-items: center; padding-left: 9px; width: 919px; }
  .facts span { flex: none; display: flex; align-items: center; gap: 4px; height: 21px; }
  .facts span:nth-child(1) { margin-right: 10px; }
  .facts span:nth-child(2) { margin-right: 10px; }
  .facts span:nth-child(4) { margin-right: 11.5px; }
  .facts span:nth-child(6) { margin-right: 9px; }
  .facts span:nth-child(7) { margin-right: 8px; }
  .facts .line { border-right: 1px solid #e0e0e0; }
  .facts .spell { width: 82px; }
  .facts .proof { width: 97.5px; padding-left: 8px; }
  .facts .compat { width: 55px; }
  .modes { display: flex; align-items: center; width: 190px; height: 25px; border-right: 1px solid #ddd; gap: 9px; }
  .modes .sel { width: 23px; height: 24px; margin: 0 -2px; padding: 4px 3px; border-radius: 3px; background: #c9c9c9; }
  .zoomer { display: flex; align-items: center; padding-left: 12px; }
  .zoomer span { width: 37px; }
  .zoomer svg:nth-of-type(1) { margin-right: 12px; }
  .zoomer svg:nth-of-type(2) { margin-right: 12px; }

  .taskbar { height: 37px; flex: none; display: flex; align-items: center; justify-content: space-between; padding-top: 4px; background: linear-gradient(90deg, #0c121b, #17212a 35%, #17222a 55%, #151c24 75%, #0c1015); }
  .apps { display: flex; margin-left: -1px; }
  .apps span { display: flex; align-items: center; justify-content: center; flex: none; }
  .tray { display: flex; align-items: center; color: #fff; font-size: 13px; }
  .tray svg:nth-of-type(2) { margin: 0 6px 0 36px; }
  .tray span { margin: 0 5px 0 7px; }
  .tray i { width: 1px; height: 37px; margin: -4px 3px 0 0; background: #777; }
  .progress { height: 4px; flex: none; display: flex; background: #38393b; }
  .progress i { width: 826px; background: #00a7e8; }
  .progress b { width: 545px; background: #7d7d7f; }

  .side-shade { position: absolute; right: 0; top: 20px; width: 46px; height: 820px; background: linear-gradient(90deg, transparent, rgba(0, 0, 0, .03) 45%, rgba(0, 0, 0, .16)); mask-image: linear-gradient(transparent, #000 9%, #000 85%, transparent); pointer-events: none; }
  .subtitle { position: absolute; left: 412px; top: 45px; overflow: visible; font: 50px "Liberation Sans", "Noto Sans CJK SC", sans-serif; filter: drop-shadow(0 1px 1px rgba(0, 0, 0, .7)); }
  .subtitle text { fill: #fff; stroke: #161616; stroke-width: 4px; stroke-linejoin: round; paint-order: stroke fill; }
</style>
